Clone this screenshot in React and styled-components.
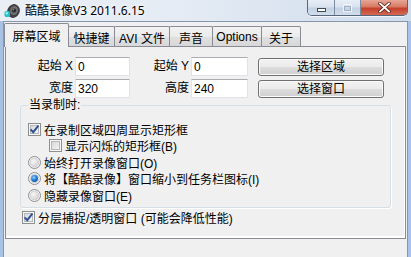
import React from 'react';
import styled, { createGlobalStyle } from 'styled-components';

const GlobalStyle = createGlobalStyle`
  html, body {
    margin: 0;
    padding: 0;
    background: #f0f0f0;
  }
  body {
    font-family: "Liberation Sans", "Noto Sans CJK SC", sans-serif;
    font-size: 12px;
    color: #000;
  }
`;

const Window = styled.div`
  width: 411px;
  height: 257px;
  display: flex;
  flex-direction: column;
  overflow: hidden;
  background: linear-gradient(90deg, #a7c2e4 0%, #bcd0ea 50%, #a6c4ea 100%);
`;

const TitleBar = styled.div`
  height: 21px;
  flex: none;
  display: flex;
  align-items: flex-start;
  padding-left: 4px;
  background: linear-gradient(90deg, #eaeff6 0%, #e4ebf4 45%, #cfdcec 100%);
`;

const AppIcon = styled.svg`
  margin-top: 3px;
  flex: none;
`;

const Title = styled.div`
  margin-left: 5px;
  font-family: "Noto Sans", "Noto Sans CJK SC", sans-serif;
  font-size: 12px;
  line-height: 22px;
  color: #000;
  text-shadow: 0 0 6px #fff, 0 0 3px #fff;
`;

const Controls = styled.div`
  margin-left: auto;
  margin-right: 3px;
  height: 16px;
  box-sizing: border-box;
  display: flex;
  border: 1px solid #56667c;
  border-top: none;
  border-radius: 0 0 5px 5px;
  overflow: hidden;
  box-shadow: 0 1px 0 rgba(255, 255, 255, 0.7);
`;

const CtrlButton = styled.div`
  width: ${p => p.$w}px;
  display: flex;
  align-items: center;
  justify-content: center;
  background: ${p => p.$close
    ? 'linear-gradient(180deg, #e7a796 0%, #d77a64 45%, #c4412c 55%, #d36a52 100%)'
    : 'linear-gradient(180deg, #e8eef6 0%, #d8e2ee 45%, #c3d1e2 55%, #d2deea 100%)'};
  & + & {
    border-left: 1px solid #7a8ba2;
  }
`;

const Client = styled.div`
  flex: 1;
  margin: 0 3px;
  background: #f0f0f0;
  border: 1px solid #8796ab;
  border-bottom: none;
  padding: 1px 1px 0 1px;
  display: flex;
  flex-direction: column;
`;

const TabStrip = styled.div`
  display: flex;
  align-items: flex-end;
  height: 23px;
  margin-left: -1px;
`;

const Tab = styled.div`
  box-sizing: border-box;
  width: ${p => p.$w}px;
  height: ${p => (p.$active ? 24 : 20)}px;
  margin-bottom: ${p => (p.$active ? -1 : 0)}px;
  position: relative;
  z-index: ${p => (p.$active ? 2 : 1)};
  border: 1px solid #898c95;
  border-bottom: none;
  border-radius: 2px 2px 0 0;
  background: ${p => (p.$active
    ? '#f0f0f0'
    : 'linear-gradient(180deg, #f2f2f2 0%, #ebebeb 50%, #e0e0e0 51%, #d8d8d8 100%)')};
  display: flex;
  align-items: center;
  justify-content: center;
  font-size: 12px;
  padding-top: ${p => (p.$active ? 0 : 1)}px;
  & + & {
    margin-left: -1px;
  }
`;

const Panel = styled.div`
  box-sizing: border-box;
  height: 193px;
  border: 1px solid #898c95;
  background: #f0f0f0;
  box-shadow: inset -1px -2px 0 #fff;
  padding: 10px 0 0 0;
  display: flex;
  flex-direction: column;
  align-items: flex-start;
`;

const FormGrid = styled.div`
  display: grid;
  grid-template-columns: 69px 55px 61px 57px auto;
  grid-auto-rows: 19px;
  row-gap: 3px;
  align-items: center;
`;

const Label = styled.div`
  text-align: right;
  padding-right: 2px;
  line-height: 19px;
  white-space: nowrap;
`;

const TextInput = styled.input`
  box-sizing: border-box;
  width: 100%;
  height: 19px;
  margin: 0;
  padding: 0 0 0 2px;
  background: #fff;
  border: 1px solid #e2e3ea;
  border-top-color: #abadb3;
  font: inherit;
  font-size: 12px;
  color: #000;
  outline: none;
`;

const Button = styled.button`
  box-sizing: border-box;
  width: 126px;
  height: 18px;
  margin: 0 0 0 10px;
  padding: 0;
  border: 1px solid #707070;
  border-radius: 3px;
  background: linear-gradient(180deg, #f2f2f2 0%, #ebebeb 50%, #dddddd 51%, #cfcfcf 100%);
  box-shadow: inset 0 0 0 1px #fbfbfb;
  font: inherit;
  font-size: 12px;
  line-height: 16px;
  color: #000;
`;

const GroupBox = styled.fieldset`
  box-sizing: border-box;
  width: 371px;
  margin: 0 0 0 14px;
  padding: 9px 7px 3px 7px;
  min-width: 0;
  border: 1px solid #d5dfe5;
  border-radius: 3px;
  box-shadow: 1px 1px 0 #fff;
`;

const Legend = styled.legend`
  padding: 0 1px;
  line-height: 14px;
  font-size: 12px;
`;

const Option = styled.div`
  display: flex;
  align-items: center;
  gap: 3px;
  height: 16.5px;
  padding-left: ${p => p.$indent || 0}px;
  margin-left: ${p => p.$offset || 0}px;
  margin-top: ${p => p.$top || 0}px;
  white-space: nowrap;
`;

const CheckBox = ({ checked }) => (
  <svg width="13" height="13" viewBox="0 0 13 13" style={{ flex: 'none' }}>
    <defs>
      <linearGradient id="cbIn" x1="0" y1="0" x2="1" y2="1">
        <stop offset="0" stopColor="#d6d6d6" />
        <stop offset="1" stopColor="#f6f6f6" />
      </linearGradient>
    </defs>
    <rect x="0.5" y="0.5" width="12" height="12" fill="#f6f6f6" stroke="#8e8f8f" />
    <rect x="2.5" y="2.5" width="8" height="8" fill="url(#cbIn)" stroke="#b5b9be" />
    {checked && (
      <path d="M2.6 6.4 L5.2 9.2 L10.4 2.6" stroke="#2d4f94" strokeWidth="1.9" fill="none" />
    )}
  </svg>
);

const Radio = ({ checked }) => (
  <svg width="13" height="13" viewBox="0 0 13 13" style={{ flex: 'none' }}>
    <defs>
      <radialGradient id="rdIn" cx="0.35" cy="0.35" r="0.8">
        <stop offset="0" stopColor="#f6f6f6" />
        <stop offset="1" stopColor="#cfcfcf" />
      </radialGradient>
      <radialGradient id="rdDot" cx="0.4" cy="0.35" r="0.7">
        <stop offset="0" stopColor="#9fd4fb" />
        <stop offset="0.5" stopColor="#2a86dd" />
        <stop offset="1" stopColor="#0b4fa6" />
      </radialGradient>
    </defs>
    <circle cx="6.5" cy="6.5" r="6" fill="#f4f4f4" stroke="#8e8f8f" />
    <circle cx="6.5" cy="6.5" r="4.3" fill="url(#rdIn)" stroke="#bfc3c8" strokeWidth="0.6" />
    {checked && <circle cx="6.5" cy="6.5" r="3.4" fill="url(#rdDot)" />}
  </svg>
);

const tabs = [
  { label: '屏幕区域', w: 65, active: true },
  { label: '快捷键', w: 47 },
  { label: 'AVI 文件', w: 56 },
  { label: '声音', w: 44 },
  { label: 'Options', w: 50 },
  { label: '关于', w: 40 },
];

const App = () => (
  <>
    <GlobalStyle />
    <Window>
      <TitleBar>
        <AppIcon width="16" height="16" viewBox="0 0 16 16">
          <ellipse cx="9.5" cy="8" rx="6.2" ry="7" fill="#3f3f42" transform="rotate(25 9.5 8)" />
          <ellipse cx="10" cy="7.5" rx="4" ry="4.6" fill="#6d6d72" transform="rotate(25 10 7.5)" />
          <circle cx="10" cy="7.5" r="2.1" fill="#2a2a2c" />
          <circle cx="9.3" cy="6.8" r="0.8" fill="#9a9aa0" />
          <rect x="0.5" y="8" width="5.5" height="6" rx="1.8" fill="#27c0c8" />
          <rect x="1.5" y="9" width="2.5" height="2.5" rx="1" fill="#8ff0f2" />
        </AppIcon>
        <Title>酷酷录像V3 2011.6.15</Title>
        <Controls>
          <CtrlButton $w={26}>
            <svg width="11" height="10" viewBox="0 0 11 10">
              <rect x="1.5" y="5.5" width="8" height="3" fill="#fff" stroke="#3c4a5e" />
            </svg>
          </CtrlButton>
          <CtrlButton $w={25}>
            <svg width="11" height="10" viewBox="0 0 11 10">
              <rect x="1.5" y="1.5" width="8" height="7" fill="none" stroke="#eef3f8" strokeWidth="1" />
              <rect x="2.5" y="3.5" width="6" height="4" fill="none" stroke="#9fb0c4" />
            </svg>
          </CtrlButton>
          <CtrlButton $w={46} $close>
            <svg width="13" height="11" viewBox="0 0 13 11">
              <path d="M2 1.5 L11 9.5 M11 1.5 L2 9.5" stroke="#5b1d14" strokeWidth="3.4" strokeLinecap="square" />
              <path d="M2 1.5 L11 9.5 M11 1.5 L2 9.5" stroke="#fff" strokeWidth="1.8" strokeLinecap="square" />
            </svg>
          </CtrlButton>
        </Controls>
      </TitleBar>
      <Client>
        <TabStrip>
          {tabs.map(t => (
            <Tab key={t.label} $w={t.w} $active={t.active}>{t.label}</Tab>
          ))}
        </TabStrip>
        <Panel>
          <FormGrid>
            <Label>起始 X</Label>
            <TextInput readOnly value="0" />
            <Label>起始 Y</Label>
            <TextInput readOnly value="0" />
            <Button>选择区域</Button>
            <Label>宽度</Label>
            <TextInput readOnly value="320" />
            <Label>高度</Label>
            <TextInput readOnly value="240" />
            <Button>选择窗口</Button>
          </FormGrid>
          <GroupBox>
            <Legend>当录制时:</Legend>
            <Option>
              <CheckBox checked />
              <span>在录制区域四周显示矩形框</span>
            </Option>
            <Option $indent={21}>
              <CheckBox />
              <span>显示闪烁的矩形框(B)</span>
            </Option>
            <Option>
              <Radio />
              <span>始终打开录像窗口(O)</span>
            </Option>
            <Option>
              <Radio checked />
              <span>将【酷酷录像】窗口缩小到任务栏图标(I)</span>
            </Option>
            <Option>
              <Radio />
              <span>隐藏录像窗口(E)</span>
            </Option>
          </GroupBox>
          <Option $offset={16} $top={2}>
            <CheckBox checked />
            <span>分层捕捉/透明窗口 (可能会降低性能)</span>
          </Option>
        </Panel>
      </Client>
    </Window>
  </>
);

export default App;
